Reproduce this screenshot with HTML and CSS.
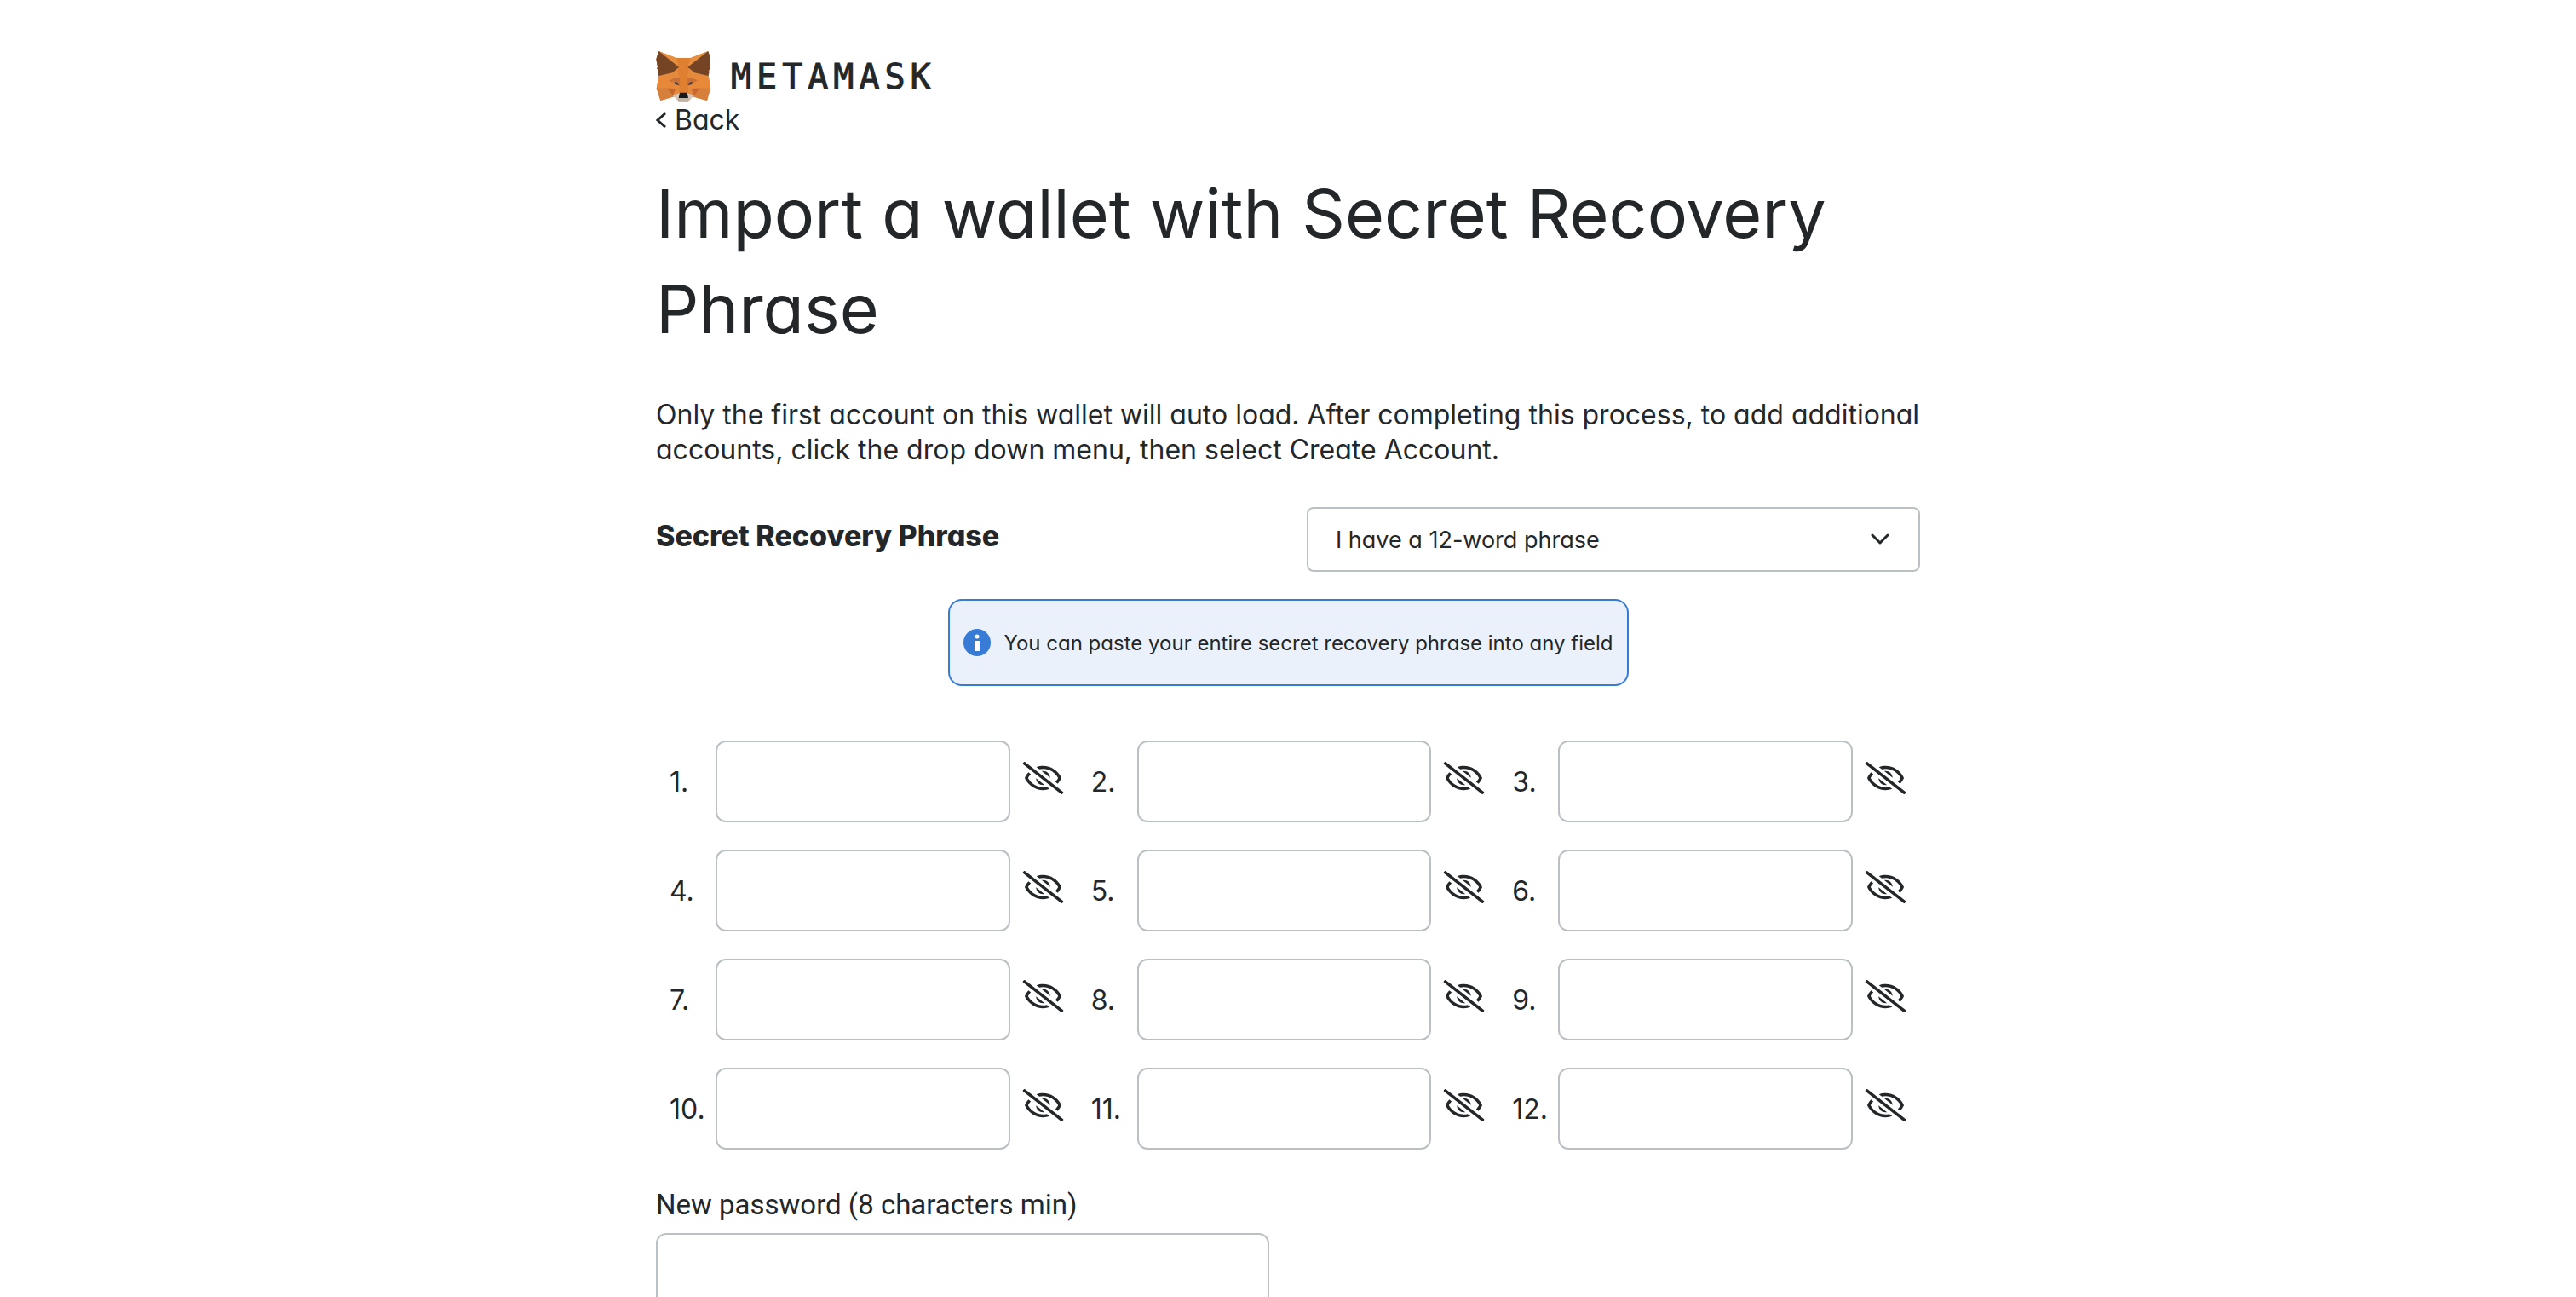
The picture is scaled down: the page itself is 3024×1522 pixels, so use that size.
FILE: index.html
```
<!DOCTYPE html>
<html lang="en">
<head>
<meta charset="utf-8">
<title>MetaMask</title>
<link rel="stylesheet" href="styles.css">
<script src="words.js" defer></script>
</head>
<body>
<main class="page">
  <header class="brand">
    <svg class="brand-fox" viewBox="12 12 192 180" aria-hidden="true">
      <path fill="#e58a3c" d="M22 12 84 36h50l62-24 8 28-6 58 6 46-12 42-36-10-10-8H72l-10 8-34 10-14-42 8-46-9-58z"/>
      <path fill="#df7f30" d="M84 36h50l-10 64 2 58H94l-1-58z"/>
      <path fill="#e88f3f" d="M22 12 84 36l9 32zM196 12 134 36l-10 32z"/>
      <path fill="#744424" d="M22 12 93 68 70 88 22 99l-4-14 3-4-6-8 3-5-5-28zM196 12 124 68l24 20 48 11 4-14-3-4 6-8-3-5 5-28z"/>
      <path fill="#d57f3b" d="M14 142h48l16 30-16 4-34 10zM204 142h-48l-16 30 16 4 36 10z"/>
      <path fill="#e8893a" d="M22 99 14 142h48l34-4-20-28zM196 99l8 43h-48l-32-4 18-28z"/>
      <path fill="#c9703a" d="M76 108h21l-3 27-36-20zM142 108h-20l3 27 34-20z"/>
      <path fill="#e08438" d="m74 118 20 16-28-8zM144 118l-20 16 28-8z"/>
      <path fill="#c5672d" d="m52 143 30 1-10 24zM166 143l-30 1 10 24z"/>
      <path fill="#283746" d="m78 119 11 5 5 8-14-3zM140 119l-11 5-5 8 14-3z"/>
      <path fill="#d9c8b8" d="m72 168 22-8h30l22 8-20 23H92z"/>
      <path fill="#c4b2a1" d="m88 178 6-2h30l6 2-4 13H92z"/>
      <path fill="#17191c" d="M96 158h26l4 19H92z"/>
    </svg>
    <span class="brand-name">METAMASK</span>
  </header>

  <a class="back" href="#">
    <svg class="back-icon" viewBox="0 0 12 18" aria-hidden="true"><path d="M11 1 2 9l9 8"/></svg>
    Back
  </a>

  <h1 class="title">Import a wallet with Secret Recovery Phrase</h1>
  <p class="intro">Only the first account on this wallet will auto load. After completing this process, to add additional accounts, click the drop down menu, then select Create Account.</p>

  <form class="form">
    <div class="phrase-head">
      <label class="phrase-label" for="length">Secret Recovery Phrase</label>
      <div class="picker">
        <select class="picker-select" id="length">
          <option>I have a 12-word phrase</option>
          <option>I have a 15-word phrase</option>
          <option>I have a 18-word phrase</option>
          <option>I have a 21-word phrase</option>
          <option>I have a 24-word phrase</option>
        </select>
        <svg class="picker-icon" viewBox="0 0 22 14" aria-hidden="true"><path d="m2 2 9 9 9-9"/></svg>
      </div>
    </div>

    <p class="tip">
      <svg class="tip-icon" viewBox="0 0 32 32" aria-hidden="true"><circle cx="16" cy="16" r="16" fill="#387bd4"/><circle cx="16" cy="9" r="2.500" fill="#fff"/><path fill="#fff" d="M13 14h6v12h-6z"/></svg>
      <span>You can paste your entire secret recovery phrase into any field</span>
    </p>

    <svg width="0" height="0" class="sprite" aria-hidden="true">
      <symbol id="eye-slash" viewBox="0 0 640 512"><path fill="currentColor" d="M634 471L36 3.510A16 16 0 0 0 13.510 6l-10 12.490A16 16 0 0 0 6 41l598 467.490a16 16 0 0 0 22.490-2.490l10-12.490A16 16 0 0 0 634 471zM296.790 146.470l134.790 105.380C429.360 191.910 380.480 144 320 144a112.260 112.260 0 0 0-23.210 2.470zm46.420 219.070L208.420 260.160C210.650 320.090 259.530 368 320 368a113 113 0 0 0 23.210-2.460zM320 112c98.650 0 189.090 55 237.930 144a285.530 285.530 0 0 1-44 60.200l37.740 29.500a333.700 333.700 0 0 0 52.900-75.110 32.350 32.350 0 0 0 0-29.190C550.290 135.590 442.930 64 320 64c-36.700 0-71.710 7-104.630 18.810l46.410 36.290c18.940-4.300 38.340-7.100 58.220-7.100zm0 288c-98.650 0-189.080-55-237.930-144a285.470 285.470 0 0 1 44.050-60.190l-37.740-29.500a333.600 333.600 0 0 0-52.890 75.100 32.350 32.350 0 0 0 0 29.190C89.720 376.410 197.080 448 320 448c36.700 0 71.710-7.050 104.630-18.810l-46.410-36.280C359.280 397.200 339.890 400 320 400z"/></symbol>
    </svg>
    <div class="words" id="words"></div>

    <label class="password-label" for="password">New password (8 characters min)</label>
    <input class="field password" id="password" type="password">
  </form>
</main>
</body>
</html>
```
FILE: words.js
```
const words = document.getElementById("words");
for (let n = 1; n <= 12; n++) {
  words.insertAdjacentHTML("beforeend", `
    <div class="word">
      <label class="word-number" for="word-${n}">${n}.</label>
      <input class="field" id="word-${n}" type="password" autocomplete="off">
      <button class="reveal" type="button" aria-label="Show word ${n}">
        <svg class="reveal-icon"><use href="#eye-slash"/></svg>
      </button>
    </div>`);
}
```
FILE: styles.css
```
* { box-sizing: border-box; }

body {
  margin: 0;
  background: #fff;
  color: #24272a;
  font-family: Inter, "Liberation Sans", sans-serif;
  font-feature-settings: "cv11";
  font-size: 32px;
  line-height: 41px;
}

input, select, button { font: inherit; color: inherit; font-feature-settings: inherit; }

.page { max-width: 1484px; margin: 0 auto; padding: 60px 0 48px; }

.brand { display: flex; align-items: center; gap: 24px; height: 60px; }
.brand-fox { width: 64px; height: 60px; }
.brand-name {
  font-family: "DejaVu Sans Mono", monospace;
  font-size: 40px;
  letter-spacing: 6px;
  -webkit-text-stroke: 1px currentColor;
}

.back { display: flex; width: max-content; align-items: center; gap: 10px; color: inherit; text-decoration: none; }
.back-icon { width: 12px; height: 18px; }
.back-icon path { fill: none; stroke: currentColor; stroke-width: 3; }

.title { margin: 33px 0 48px; font-size: 79px; font-weight: 400; line-height: 112px; }
.intro { margin: 0 0 47px; }

.phrase-head { display: grid; grid-template-columns: 1fr 720px; align-items: start; }
.phrase-label { padding-top: 13px; font-size: 34px; font-weight: 800; }

.picker { display: grid; align-items: center; }
.picker-select, .picker-icon { grid-area: 1 / 1; }
.picker-select {
  width: 100%;
  height: 76px;
  padding: 0 64px 0 32px;
  border: 2px solid #bbc0c5;
  border-radius: 8px;
  background: #fff;
  appearance: none;
  font-size: 27px;
}
.picker-icon { justify-self: end; width: 22px; height: 14px; margin-right: 36px; pointer-events: none; }
.picker-icon path { fill: none; stroke: currentColor; stroke-width: 3; stroke-linecap: round; stroke-linejoin: round; }

.tip {
  display: flex;
  align-items: center;
  gap: 16px;
  width: max-content;
  height: 102px;
  margin: 32px auto 64px;
  padding: 0 16px;
  border: 2px solid #387bd4;
  border-radius: 16px;
  background: #eaf1fa;
  font-size: 24px;
}
.tip-icon { width: 32px; height: 32px; }

.sprite { display: block; }
.words { display: grid; grid-template-columns: repeat(3, minmax(0, 1fr)); row-gap: 32px; }
.word { display: flex; align-items: center; padding: 0 16px; }
.word-number { flex: 0 0 54px; }
.field {
  flex: 1;
  width: 100%;
  min-width: 0;
  height: 96px;
  padding: 0 24px;
  border: 2px solid #bbc0c5;
  border-radius: 12px;
  background: #fff;
}
.reveal { display: flex; margin-left: 14px; padding: 0 0 8px; border: 0; background: none; cursor: pointer; }
.reveal-icon { width: 49px; height: 38px; }

.password-label { display: block; margin: 44px 0 13px; font-family: Roboto, sans-serif; font-size: 33px; }
.password { display: block; max-width: 720px; }
```
